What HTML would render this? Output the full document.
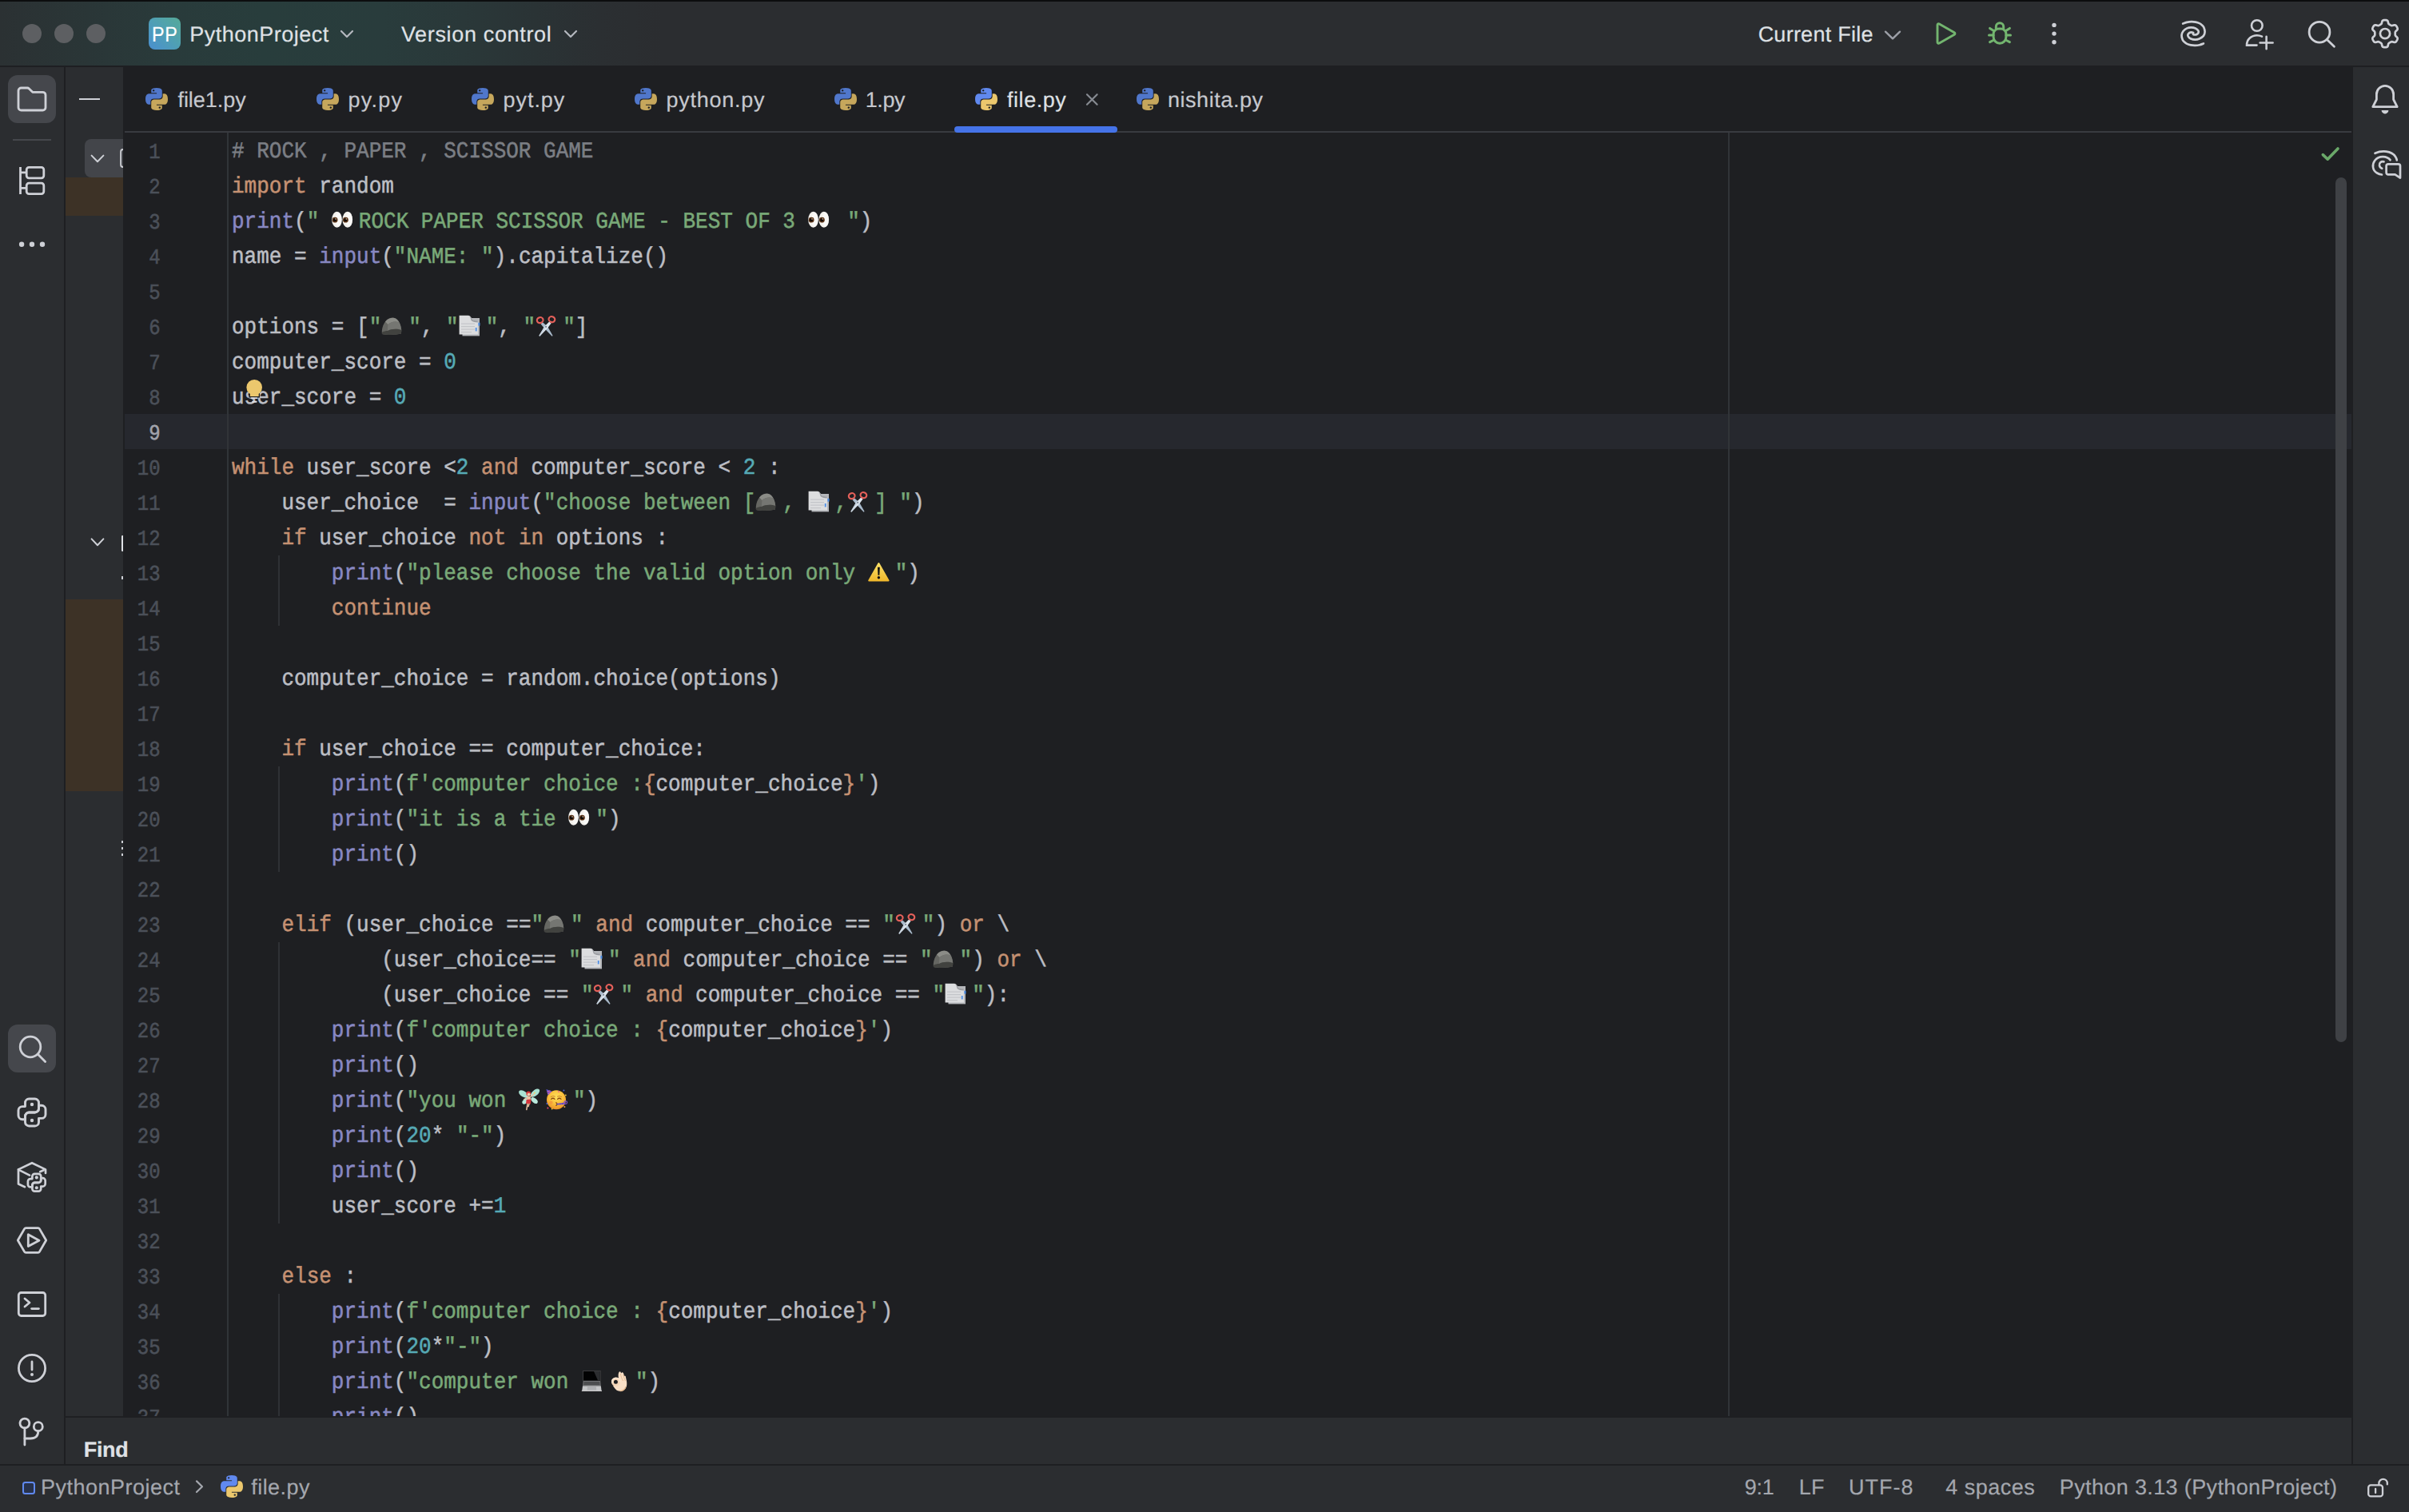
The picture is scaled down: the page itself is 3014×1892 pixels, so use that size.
<!DOCTYPE html>
<html>
<head>
<meta charset="utf-8">
<title>PythonProject – file.py</title>
<style>
html,body{margin:0;padding:0;background:#1e1f22;}
body{text-rendering:geometricPrecision;width:3014px;height:1892px;position:relative;overflow:hidden;font-family:"Liberation Sans",sans-serif;color:#dfe1e5;}
.abs{position:absolute;}
svg{display:block;overflow:visible;}
/* title bar */
#topline{left:0;top:0;width:3014px;height:2px;background:#0c0d0e;}
#title{left:0;top:2px;width:3014px;height:80px;background:#2b2d30;}
#titlegrad{left:0;top:2px;width:1000px;height:80px;background:linear-gradient(90deg,#2b3133 0px,#2a3637 110px,#293b3b 220px,#283d3c 330px,#293c3c 480px,#2a3839 580px,#2a3335 670px,#2b2f32 750px,#2b2d30 830px);}
.tl{width:24px;height:24px;border-radius:50%;background:#5d5f62;top:30.3px;}
.ui{font-size:26px;line-height:40px;white-space:nowrap;color:#dfe1e5;}
/* panels */
#lstripe{left:0;top:84px;width:80px;height:1748px;background:#2b2d30;}
#lsep{left:80px;top:82px;width:2px;height:1750px;background:#1e1f22;}
#proj{left:82px;top:84px;width:72px;height:1688px;background:#2b2d30;}
#rstripe{left:2944px;top:84px;width:70px;height:1748px;background:#2b2d30;}
#rsep{left:2942px;top:82px;width:2px;height:1750px;background:#1e1f22;}
#editor{left:154px;top:82px;width:2788px;height:1692px;background:#1e1f22;overflow:hidden;}
#tabline{left:156px;top:164px;width:2786px;height:2px;background:#393b40;}
#gutline{left:284px;top:166px;width:2px;height:1606px;background:#313438;}
#margin{left:2162px;top:166px;width:2px;height:1606px;background:#313438;}
#curline{left:156px;top:518px;width:2786px;height:44px;background:#26282e;}
#findbar{left:82px;top:1774px;width:2860px;height:58px;background:#2b2d30;}
#findtop{left:82px;top:1772px;width:2860px;height:2px;background:#1e1f22;}
#status{left:0;top:1834px;width:3014px;height:58px;background:#2b2d30;}
#statustop{left:0;top:1832px;width:3014px;height:2px;background:#1e1f22;}
.st{font-size:26px;line-height:40px;color:#a8abb2;top:1840px;white-space:nowrap;}
/* tabs */
.tab{top:105px;font-size:26px;line-height:40px;color:#ced0d6;white-space:nowrap;}
/* code */
.cl{position:absolute;left:290px;height:44px;line-height:44px;font-family:"Liberation Mono",monospace;font-size:26px;color:#bcbec4;white-space:pre;}
.ln{position:absolute;left:150px;width:50.6px;height:44px;line-height:44px;text-align:right;font-family:"Liberation Mono",monospace;font-size:24px;color:#4b5059;}
.ln .t{transform:translateY(4.6px) scaleY(1.13);transform-origin:0 28.4px;}
.ln.cur{color:#a1a3ab;}
.t{display:inline-block;transform:translateY(1.0px) scaleY(1.10);transform-origin:0 28.9px;-webkit-text-stroke:0.5px currentColor;}
.k{color:#c59172}.s{color:#79a978}.n{color:#56aab6}.b{color:#8888c2}.c{color:#7b7e84}
.e{display:inline-block;width:34px;height:44px;vertical-align:top;}
.e svg{width:34px;height:44px;}
.guide{position:absolute;width:2px;background:#2f3135;}
</style>
</head>
<body>
<div id="topline" class="abs"></div>
<div id="title" class="abs"></div>
<div id="titlegrad" class="abs"></div>
<div class="abs tl" style="left:27.9px"></div>
<div class="abs tl" style="left:67.7px"></div>
<div class="abs tl" style="left:107.6px"></div>
<div class="abs" style="left:186px;top:22px;width:40px;height:40px;border-radius:8px;background:linear-gradient(45deg,#4a8fd0 0%,#4f9fb5 50%,#56aa98 100%);"></div>
<div class="abs" style="left:189.69px;top:23.01px;font-size:26.5px;line-height:40px;letter-spacing:0.720px;color:#ffffff;white-space:nowrap;-webkit-text-stroke:0.2px #ffffff;transform:scaleX(0.88);transform-origin:0 0;">PP</div>
<div class="abs" style="left:237.29px;top:22.84px;font-size:27px;line-height:40px;letter-spacing:0.485px;color:#dfe1e5;white-space:nowrap;-webkit-text-stroke:0.2px #dfe1e5;">PythonProject</div>
<svg class="abs" style="left:0px;top:0px;" width="10" height="10" viewBox="0 0 10 10" fill="none"><path d="M427 39 L434.0 46 L441 39" stroke="#b4b8bf" stroke-width="2.2" stroke-linecap="round" stroke-linejoin="round"/></svg>
<div class="abs" style="left:501.88px;top:22.84px;font-size:27px;line-height:40px;letter-spacing:0.666px;color:#dfe1e5;white-space:nowrap;-webkit-text-stroke:0.2px #dfe1e5;">Version control</div>
<svg class="abs" style="left:0px;top:0px;" width="10" height="10" viewBox="0 0 10 10" fill="none"><path d="M707 39 L714.0 46 L721 39" stroke="#b4b8bf" stroke-width="2.2" stroke-linecap="round" stroke-linejoin="round"/></svg>
<div class="abs" style="left:2199.63px;top:22.84px;font-size:27px;line-height:40px;letter-spacing:0.249px;color:#dfe1e5;white-space:nowrap;-webkit-text-stroke:0.2px #dfe1e5;">Current File</div>
<svg class="abs" style="left:0px;top:0px;" width="10" height="10" viewBox="0 0 10 10" fill="none"><path d="M2359 39.7 L2368.0 48.3 L2377 39.7" stroke="#9da0a8" stroke-width="2.4" stroke-linecap="round" stroke-linejoin="round"/></svg>
<svg class="abs" style="left:0px;top:0px;" width="10" height="10" viewBox="0 0 10 10" fill="none"><path d="M2424 31.2 V52.8 a1.6 1.6 0 0 0 2.4 1.3 L2445.2 43.3 a1.5 1.5 0 0 0 0 -2.6 L2426.4 29.9 a1.6 1.6 0 0 0 -2.4 1.3 Z" stroke="#73b56f" stroke-width="2.9" stroke-linejoin="round"/></svg>
<svg class="abs" style="left:0px;top:0px;" width="10" height="10" viewBox="0 0 10 10" fill="none"><g stroke="#73b56f" stroke-width="3" stroke-linecap="round" stroke-linejoin="round"><path d="M2494.1 42.6 a6.5 6.5 0 0 1 6.5 -6.5 h2.8 a6.5 6.5 0 0 1 6.5 6.5 v3.7 a7.9 7.9 0 0 1 -15.8 0 Z"/><path d="M2497.3 35.4 v-2 a4.7 4.7 0 0 1 9.4 0 v2"/><path d="M2494.4 38.6 L2489.6 35.4 M2509.6 38.6 L2514.4 35.4 M2494 43.9 H2488.5 M2510 43.9 H2515.5 M2494.8 50 L2489.6 52.6 M2509.2 50 L2514.4 52.6"/></g></svg>
<svg class="abs" style="left:0px;top:0px;" width="10" height="10" viewBox="0 0 10 10" fill="none"><circle cx="2570" cy="31.4" r="2.7" fill="#ced0d6"/><circle cx="2570" cy="42.1" r="2.7" fill="#ced0d6"/><circle cx="2570" cy="52.8" r="2.7" fill="#ced0d6"/></svg>
<svg class="abs" style="left:0px;top:0px;" width="10" height="10" viewBox="0 0 10 10" fill="none"><g stroke="#ced0d6" stroke-width="2.7" stroke-linecap="round" stroke-linejoin="round" fill="none"><path d="M2731.10 29.50 C2731.92 29.23 2734.22 28.30 2736.00 27.90 C2737.78 27.50 2739.97 27.15 2741.80 27.10 C2743.63 27.05 2745.35 27.27 2747.00 27.60 C2748.65 27.93 2750.37 28.47 2751.70 29.10 C2753.03 29.73 2754.07 30.55 2755.00 31.40 C2755.93 32.25 2756.70 32.80 2757.30 34.20 C2757.90 35.60 2758.67 38.02 2758.60 39.80 C2758.53 41.58 2758.05 43.45 2756.90 44.90 C2755.75 46.35 2753.43 47.70 2751.70 48.50 C2749.97 49.30 2748.28 49.70 2746.50 49.70 C2744.72 49.70 2742.45 49.17 2741.00 48.50 C2739.55 47.83 2738.40 46.57 2737.80 45.70 C2737.20 44.83 2737.13 44.08 2737.40 43.30 C2737.67 42.52 2738.67 41.48 2739.40 41.00 C2740.13 40.52 2741.00 40.40 2741.80 40.40 C2742.60 40.40 2743.80 40.90 2744.20 41.00 "/><path d="M2756.90 54.50 C2756.08 54.78 2753.73 55.82 2752.00 56.20 C2750.27 56.58 2748.33 56.77 2746.50 56.80 C2744.67 56.83 2742.72 56.72 2741.00 56.40 C2739.28 56.08 2737.53 55.53 2736.20 54.90 C2734.87 54.27 2733.92 53.47 2733.00 52.60 C2732.08 51.73 2731.28 51.12 2730.70 49.70 C2730.12 48.28 2729.37 45.88 2729.50 44.10 C2729.63 42.32 2730.38 40.45 2731.50 39.00 C2732.62 37.55 2734.55 36.17 2736.20 35.40 C2737.85 34.63 2739.62 34.40 2741.40 34.40 C2743.18 34.40 2745.42 34.77 2746.90 35.40 C2748.38 36.03 2749.70 37.27 2750.30 38.20 C2750.90 39.13 2750.80 40.20 2750.50 41.00 C2750.20 41.80 2749.30 42.58 2748.50 43.00 C2747.70 43.42 2746.48 43.53 2745.70 43.50 C2744.92 43.47 2744.12 42.92 2743.80 42.80 "/></g></svg>
<svg class="abs" style="left:0px;top:0px;" width="10" height="10" viewBox="0 0 10 10" fill="none"><g stroke="#ced0d6" stroke-width="2.6" stroke-linecap="round" fill="none"><circle cx="2823.8" cy="32" r="6.8"/><path d="M2823.5 56.6 H2811 C2811 49 2817 44.2 2823.8 44.2 C2826.2 44.2 2828.2 44.7 2830 45.6"/><path d="M2835.6 45.8 V61.2 M2827.6 53.5 H2843.6"/></g></svg>
<svg class="abs" style="left:0px;top:0px;" width="10" height="10" viewBox="0 0 10 10" fill="none"><g stroke="#ced0d6" stroke-width="2.8" stroke-linecap="round" fill="none"><circle cx="2902" cy="40.2" r="12.9"/><path d="M2911.4 49.4 L2920.4 58.2"/></g></svg>
<svg class="abs" style="left:0px;top:0px;" width="10" height="10" viewBox="0 0 10 10" fill="none"><path d="M2984.00 25.00 L2984.89 25.04 L2985.78 25.16 L2986.63 25.47 L2987.38 26.22 L2987.86 27.71 L2988.19 29.20 L2988.64 30.00 L2989.19 30.43 L2989.77 30.77 L2990.35 31.10 L2990.92 31.44 L2991.51 31.77 L2992.16 32.03 L2993.08 32.02 L2994.54 31.56 L2996.06 31.24 L2997.09 31.50 L2997.78 32.09 L2998.33 32.79 L2998.81 33.55 L2999.22 34.34 L2999.56 35.17 L2999.72 36.07 L2999.44 37.08 L2998.39 38.24 L2997.27 39.28 L2996.80 40.07 L2996.70 40.77 L2996.70 41.43 L2996.70 42.10 L2996.70 42.77 L2996.70 43.43 L2996.80 44.13 L2997.27 44.92 L2998.39 45.96 L2999.44 47.12 L2999.72 48.13 L2999.56 49.03 L2999.22 49.86 L2998.81 50.65 L2998.33 51.41 L2997.78 52.11 L2997.09 52.70 L2996.06 52.96 L2994.54 52.64 L2993.08 52.18 L2992.16 52.17 L2991.51 52.43 L2990.92 52.76 L2990.35 53.10 L2989.77 53.43 L2989.19 53.77 L2988.64 54.20 L2988.19 55.00 L2987.86 56.49 L2987.38 57.98 L2986.63 58.73 L2985.78 59.04 L2984.89 59.16 L2984.00 59.20 L2983.11 59.16 L2982.22 59.04 L2981.37 58.73 L2980.62 57.98 L2980.14 56.49 L2979.81 55.00 L2979.36 54.20 L2978.81 53.77 L2978.23 53.43 L2977.65 53.10 L2977.08 52.76 L2976.49 52.43 L2975.84 52.17 L2974.92 52.18 L2973.46 52.64 L2971.94 52.96 L2970.91 52.70 L2970.22 52.11 L2969.67 51.41 L2969.19 50.65 L2968.78 49.86 L2968.44 49.03 L2968.28 48.13 L2968.56 47.12 L2969.61 45.96 L2970.73 44.92 L2971.20 44.13 L2971.30 43.43 L2971.30 42.77 L2971.30 42.10 L2971.30 41.43 L2971.30 40.77 L2971.20 40.07 L2970.73 39.28 L2969.61 38.24 L2968.56 37.08 L2968.28 36.07 L2968.44 35.17 L2968.78 34.34 L2969.19 33.55 L2969.67 32.79 L2970.22 32.09 L2970.91 31.50 L2971.94 31.24 L2973.46 31.56 L2974.92 32.02 L2975.84 32.03 L2976.49 31.77 L2977.08 31.44 L2977.65 31.10 L2978.23 30.77 L2978.81 30.43 L2979.36 30.00 L2979.81 29.20 L2980.14 27.71 L2980.62 26.22 L2981.37 25.47 L2982.22 25.16 L2983.11 25.04 L2984.00 25.00 Z" stroke="#ced0d6" stroke-width="2.7" stroke-linejoin="round"/><circle cx="2984" cy="42.1" r="6.1" stroke="#ced0d6" stroke-width="2.7"/></svg>

<div class="abs" style="left:0;top:82px;width:3014px;height:2px;background:#1e1f22;"></div>
<div id="lstripe" class="abs"></div>
<div id="lsep" class="abs"></div>
<div id="proj" class="abs"></div>
<div id="editor" class="abs"></div>
<div id="rsep" class="abs"></div>
<div id="rstripe" class="abs"></div>
<div id="curline" class="abs"></div>
<div id="tabline" class="abs"></div>
<div id="gutline" class="abs"></div>
<div id="margin" class="abs"></div>
<svg class="abs" style="left:180px;top:108px;" width="32" height="32" viewBox="0 0 16 16" fill="none"><path fill-rule="evenodd" d="M7.96 1C4.4 1 4.63 2.53 4.63 2.53V4.13H8.03V4.6H3.29C3.29 4.6 1 4.35 1 7.92C1 11.49 3 11.37 3 11.37H4.17V9.71C4.17 9.71 4.1 7.72 6.13 7.72H9.49C9.49 7.72 11.39 7.75 11.39 5.9V2.84C11.39 2.84 11.68 1 7.96 1ZM6.09 2.07C6.43 2.07 6.7 2.34 6.7 2.68C6.7 3.02 6.43 3.29 6.09 3.29C5.75 3.29 5.48 3.02 5.48 2.68C5.48 2.34 5.75 2.07 6.09 2.07Z" fill="#5077cb"/><path fill-rule="evenodd" d="M8.04 15C11.6 15 11.37 13.47 11.37 13.47V11.87H7.97V11.4H12.71C12.71 11.4 15 11.65 15 8.08C15 4.51 13 4.63 13 4.63H11.83V6.29C11.83 6.29 11.9 8.28 9.87 8.28H6.51C6.51 8.28 4.61 8.25 4.61 10.1V13.16C4.61 13.16 4.32 15 8.04 15ZM9.91 13.93C9.57 13.93 9.3 13.66 9.3 13.32C9.3 12.98 9.57 12.71 9.91 12.71C10.25 12.71 10.52 12.98 10.52 13.32C10.52 13.66 10.25 13.93 9.91 13.93Z" fill="#c6a75c"/></svg>
<div class="abs" style="left:222.42px;top:104.64px;font-size:27px;line-height:40px;letter-spacing:-0.016px;color:#c6c8ce;white-space:nowrap;-webkit-text-stroke:0.2px #c6c8ce;">file1.py</div>
<svg class="abs" style="left:394px;top:108px;" width="32" height="32" viewBox="0 0 16 16" fill="none"><path fill-rule="evenodd" d="M7.96 1C4.4 1 4.63 2.53 4.63 2.53V4.13H8.03V4.6H3.29C3.29 4.6 1 4.35 1 7.92C1 11.49 3 11.37 3 11.37H4.17V9.71C4.17 9.71 4.1 7.72 6.13 7.72H9.49C9.49 7.72 11.39 7.75 11.39 5.9V2.84C11.39 2.84 11.68 1 7.96 1ZM6.09 2.07C6.43 2.07 6.7 2.34 6.7 2.68C6.7 3.02 6.43 3.29 6.09 3.29C5.75 3.29 5.48 3.02 5.48 2.68C5.48 2.34 5.75 2.07 6.09 2.07Z" fill="#5077cb"/><path fill-rule="evenodd" d="M8.04 15C11.6 15 11.37 13.47 11.37 13.47V11.87H7.97V11.4H12.71C12.71 11.4 15 11.65 15 8.08C15 4.51 13 4.63 13 4.63H11.83V6.29C11.83 6.29 11.9 8.28 9.87 8.28H6.51C6.51 8.28 4.61 8.25 4.61 10.1V13.16C4.61 13.16 4.32 15 8.04 15ZM9.91 13.93C9.57 13.93 9.3 13.66 9.3 13.32C9.3 12.98 9.57 12.71 9.91 12.71C10.25 12.71 10.52 12.98 10.52 13.32C10.52 13.66 10.25 13.93 9.91 13.93Z" fill="#c6a75c"/></svg>
<div class="abs" style="left:435.56px;top:104.64px;font-size:27px;line-height:40px;letter-spacing:1.216px;color:#c6c8ce;white-space:nowrap;-webkit-text-stroke:0.2px #c6c8ce;">py.py</div>
<svg class="abs" style="left:588px;top:108px;" width="32" height="32" viewBox="0 0 16 16" fill="none"><path fill-rule="evenodd" d="M7.96 1C4.4 1 4.63 2.53 4.63 2.53V4.13H8.03V4.6H3.29C3.29 4.6 1 4.35 1 7.92C1 11.49 3 11.37 3 11.37H4.17V9.71C4.17 9.71 4.1 7.72 6.13 7.72H9.49C9.49 7.72 11.39 7.75 11.39 5.9V2.84C11.39 2.84 11.68 1 7.96 1ZM6.09 2.07C6.43 2.07 6.7 2.34 6.7 2.68C6.7 3.02 6.43 3.29 6.09 3.29C5.75 3.29 5.48 3.02 5.48 2.68C5.48 2.34 5.75 2.07 6.09 2.07Z" fill="#5077cb"/><path fill-rule="evenodd" d="M8.04 15C11.6 15 11.37 13.47 11.37 13.47V11.87H7.97V11.4H12.71C12.71 11.4 15 11.65 15 8.08C15 4.51 13 4.63 13 4.63H11.83V6.29C11.83 6.29 11.9 8.28 9.87 8.28H6.51C6.51 8.28 4.61 8.25 4.61 10.1V13.16C4.61 13.16 4.32 15 8.04 15ZM9.91 13.93C9.57 13.93 9.3 13.66 9.3 13.32C9.3 12.98 9.57 12.71 9.91 12.71C10.25 12.71 10.52 12.98 10.52 13.32C10.52 13.66 10.25 13.93 9.91 13.93Z" fill="#c6a75c"/></svg>
<div class="abs" style="left:629.46px;top:104.64px;font-size:27px;line-height:40px;letter-spacing:0.972px;color:#c6c8ce;white-space:nowrap;-webkit-text-stroke:0.2px #c6c8ce;">pyt.py</div>
<svg class="abs" style="left:792px;top:108px;" width="32" height="32" viewBox="0 0 16 16" fill="none"><path fill-rule="evenodd" d="M7.96 1C4.4 1 4.63 2.53 4.63 2.53V4.13H8.03V4.6H3.29C3.29 4.6 1 4.35 1 7.92C1 11.49 3 11.37 3 11.37H4.17V9.71C4.17 9.71 4.1 7.72 6.13 7.72H9.49C9.49 7.72 11.39 7.75 11.39 5.9V2.84C11.39 2.84 11.68 1 7.96 1ZM6.09 2.07C6.43 2.07 6.7 2.34 6.7 2.68C6.7 3.02 6.43 3.29 6.09 3.29C5.75 3.29 5.48 3.02 5.48 2.68C5.48 2.34 5.75 2.07 6.09 2.07Z" fill="#5077cb"/><path fill-rule="evenodd" d="M8.04 15C11.6 15 11.37 13.47 11.37 13.47V11.87H7.97V11.4H12.71C12.71 11.4 15 11.65 15 8.08C15 4.51 13 4.63 13 4.63H11.83V6.29C11.83 6.29 11.9 8.28 9.87 8.28H6.51C6.51 8.28 4.61 8.25 4.61 10.1V13.16C4.61 13.16 4.32 15 8.04 15ZM9.91 13.93C9.57 13.93 9.3 13.66 9.3 13.32C9.3 12.98 9.57 12.71 9.91 12.71C10.25 12.71 10.52 12.98 10.52 13.32C10.52 13.66 10.25 13.93 9.91 13.93Z" fill="#c6a75c"/></svg>
<div class="abs" style="left:833.56px;top:104.64px;font-size:27px;line-height:40px;letter-spacing:0.739px;color:#c6c8ce;white-space:nowrap;-webkit-text-stroke:0.2px #c6c8ce;">python.py</div>
<svg class="abs" style="left:1042px;top:108px;" width="32" height="32" viewBox="0 0 16 16" fill="none"><path fill-rule="evenodd" d="M7.96 1C4.4 1 4.63 2.53 4.63 2.53V4.13H8.03V4.6H3.29C3.29 4.6 1 4.35 1 7.92C1 11.49 3 11.37 3 11.37H4.17V9.71C4.17 9.71 4.1 7.72 6.13 7.72H9.49C9.49 7.72 11.39 7.75 11.39 5.9V2.84C11.39 2.84 11.68 1 7.96 1ZM6.09 2.07C6.43 2.07 6.7 2.34 6.7 2.68C6.7 3.02 6.43 3.29 6.09 3.29C5.75 3.29 5.48 3.02 5.48 2.68C5.48 2.34 5.75 2.07 6.09 2.07Z" fill="#5077cb"/><path fill-rule="evenodd" d="M8.04 15C11.6 15 11.37 13.47 11.37 13.47V11.87H7.97V11.4H12.71C12.71 11.4 15 11.65 15 8.08C15 4.51 13 4.63 13 4.63H11.83V6.29C11.83 6.29 11.9 8.28 9.87 8.28H6.51C6.51 8.28 4.61 8.25 4.61 10.1V13.16C4.61 13.16 4.32 15 8.04 15ZM9.91 13.93C9.57 13.93 9.3 13.66 9.3 13.32C9.3 12.98 9.57 12.71 9.91 12.71C10.25 12.71 10.52 12.98 10.52 13.32C10.52 13.66 10.25 13.93 9.91 13.93Z" fill="#c6a75c"/></svg>
<div class="abs" style="left:1082.64px;top:104.64px;font-size:27px;line-height:40px;letter-spacing:-0.374px;color:#c6c8ce;white-space:nowrap;-webkit-text-stroke:0.2px #c6c8ce;">1.py</div>
<svg class="abs" style="left:1218px;top:108px;" width="32" height="32" viewBox="0 0 16 16" fill="none"><path fill-rule="evenodd" d="M7.96 1C4.4 1 4.63 2.53 4.63 2.53V4.13H8.03V4.6H3.29C3.29 4.6 1 4.35 1 7.92C1 11.49 3 11.37 3 11.37H4.17V9.71C4.17 9.71 4.1 7.72 6.13 7.72H9.49C9.49 7.72 11.39 7.75 11.39 5.9V2.84C11.39 2.84 11.68 1 7.96 1ZM6.09 2.07C6.43 2.07 6.7 2.34 6.7 2.68C6.7 3.02 6.43 3.29 6.09 3.29C5.75 3.29 5.48 3.02 5.48 2.68C5.48 2.34 5.75 2.07 6.09 2.07Z" fill="#6089ef"/><path fill-rule="evenodd" d="M8.04 15C11.6 15 11.37 13.47 11.37 13.47V11.87H7.97V11.4H12.71C12.71 11.4 15 11.65 15 8.08C15 4.51 13 4.63 13 4.63H11.83V6.29C11.83 6.29 11.9 8.28 9.87 8.28H6.51C6.51 8.28 4.61 8.25 4.61 10.1V13.16C4.61 13.16 4.32 15 8.04 15ZM9.91 13.93C9.57 13.93 9.3 13.66 9.3 13.32C9.3 12.98 9.57 12.71 9.91 12.71C10.25 12.71 10.52 12.98 10.52 13.32C10.52 13.66 10.25 13.93 9.91 13.93Z" fill="#ebc76d"/></svg>
<div class="abs" style="left:1260.02px;top:104.64px;font-size:27px;line-height:40px;letter-spacing:0.551px;color:#dfe1e5;white-space:nowrap;-webkit-text-stroke:0.2px #dfe1e5;">file.py</div>
<svg class="abs" style="left:1420px;top:108px;" width="32" height="32" viewBox="0 0 16 16" fill="none"><path fill-rule="evenodd" d="M7.96 1C4.4 1 4.63 2.53 4.63 2.53V4.13H8.03V4.6H3.29C3.29 4.6 1 4.35 1 7.92C1 11.49 3 11.37 3 11.37H4.17V9.71C4.17 9.71 4.1 7.72 6.13 7.72H9.49C9.49 7.72 11.39 7.75 11.39 5.9V2.84C11.39 2.84 11.68 1 7.96 1ZM6.09 2.07C6.43 2.07 6.7 2.34 6.7 2.68C6.7 3.02 6.43 3.29 6.09 3.29C5.75 3.29 5.48 3.02 5.48 2.68C5.48 2.34 5.75 2.07 6.09 2.07Z" fill="#5077cb"/><path fill-rule="evenodd" d="M8.04 15C11.6 15 11.37 13.47 11.37 13.47V11.87H7.97V11.4H12.71C12.71 11.4 15 11.65 15 8.08C15 4.51 13 4.63 13 4.63H11.83V6.29C11.83 6.29 11.9 8.28 9.87 8.28H6.51C6.51 8.28 4.61 8.25 4.61 10.1V13.16C4.61 13.16 4.32 15 8.04 15ZM9.91 13.93C9.57 13.93 9.3 13.66 9.3 13.32C9.3 12.98 9.57 12.71 9.91 12.71C10.25 12.71 10.52 12.98 10.52 13.32C10.52 13.66 10.25 13.93 9.91 13.93Z" fill="#c6a75c"/></svg>
<div class="abs" style="left:1460.91px;top:104.64px;font-size:27px;line-height:40px;letter-spacing:0.565px;color:#c6c8ce;white-space:nowrap;-webkit-text-stroke:0.2px #c6c8ce;">nishita.py</div>
<svg class="abs" style="left:0px;top:0px;" width="10" height="10" viewBox="0 0 10 10" fill="none"><path d="M1360 118.2 L1372.6 130.8 M1372.6 118.2 L1360 130.8" stroke="#868a91" stroke-width="2.2" stroke-linecap="round"/></svg>
<div class="abs" style="left:1194px;top:158px;width:204px;height:8px;border-radius:4px;background:#4573e8;"></div>
<div class="abs" style="left:10px;top:94px;width:60px;height:60px;border-radius:12px;background:#45474c;"></div>
<div class="abs" style="left:10px;top:1282px;width:60px;height:60px;border-radius:12px;background:#45474c;"></div>
<div class="abs" style="left:16px;top:174px;width:48px;height:2px;background:#45474c;"></div>
<svg class="abs" style="left:0px;top:0px;" width="10" height="10" viewBox="0 0 10 10" fill="none"><g stroke="#ced0d6" stroke-width="2.8" stroke-linecap="round" stroke-linejoin="round" fill="none"><path d="M23 113.6 a3.6 3.6 0 0 1 3.6 -3.6 h7.6 a3 3 0 0 1 2.2 0.9 l4.4 4.4 h12.6 a3.6 3.6 0 0 1 3.6 3.6 v15.5 a3.6 3.6 0 0 1 -3.6 3.6 h-26.8 a3.6 3.6 0 0 1 -3.6 -3.6 Z"/></g></svg>
<svg class="abs" style="left:0px;top:0px;" width="10" height="10" viewBox="0 0 10 10" fill="none"><g stroke="#ced0d6" stroke-width="2.8" stroke-linecap="round" stroke-linejoin="round" fill="none"><path d="M25.5 209 V243" stroke-linecap="butt"/><path d="M26 215.8 H33 M26 235.4 H33" stroke-linecap="butt"/><rect x="33.2" y="209.4" width="21.6" height="13.4" rx="3"/><rect x="33.2" y="229.2" width="21.6" height="13.4" rx="3"/></g></svg>
<svg class="abs" style="left:0px;top:0px;" width="10" height="10" viewBox="0 0 10 10" fill="none"><circle cx="27.1" cy="305.8" r="3.2" fill="#ced0d6"/><circle cx="40" cy="305.8" r="3.2" fill="#ced0d6"/><circle cx="53" cy="305.8" r="3.2" fill="#ced0d6"/></svg>
<svg class="abs" style="left:0px;top:0px;" width="10" height="10" viewBox="0 0 10 10" fill="none"><g stroke="#ced0d6" stroke-width="2.8" stroke-linecap="round" stroke-linejoin="round" fill="none"><circle cx="38" cy="1310" r="12.8"/><path d="M47.4 1319.3 L56.6 1328.6"/></g></svg>
<svg class="abs" style="left:20px;top:1372px;" width="40" height="40" viewBox="0 0 20 20" fill="none"><path d="M5.75 6.3 H4 A2.5 2.5 0 0 0 1.5 8.8 v3.1 a2.5 2.5 0 0 0 2.5 2.5 H5.75 v-2 a2.4 2.4 0 0 1 2.4-2.4 h3.7 a2.4 2.4 0 0 0 2.4-2.4 V3.9 a2.4 2.4 0 0 0 -2.4-2.4 h-3.7 A2.4 2.4 0 0 0 5.75 3.9 Z" stroke="#ced0d6" stroke-width="1.45" stroke-linejoin="round"/><path d="M5.75 6.3 H4 A2.5 2.5 0 0 0 1.5 8.8 v3.1 a2.5 2.5 0 0 0 2.5 2.5 H5.75 v-2 a2.4 2.4 0 0 1 2.4-2.4 h3.7 a2.4 2.4 0 0 0 2.4-2.4 V3.9 a2.4 2.4 0 0 0 -2.4-2.4 h-3.7 A2.4 2.4 0 0 0 5.75 3.9 Z" transform="rotate(180 10 10)" stroke="#ced0d6" stroke-width="1.45" stroke-linejoin="round"/><circle cx="10" cy="5" r="1.1" fill="#ced0d6"/><circle cx="10" cy="15" r="1.1" fill="#ced0d6"/></svg>
<svg class="abs" style="left:0px;top:0px;" width="10" height="10" viewBox="0 0 10 10" fill="none"><g stroke="#ced0d6" stroke-width="2.7" stroke-linecap="round" stroke-linejoin="round" fill="none"><path d="M23 1463.4 L40 1455.2 L57 1463.4 V1468"/><path d="M23 1463.4 V1481.5 L31 1485.2"/><path d="M24.5 1464.4 L37 1470.6"/><path d="M50.2 1466.2 L54.6 1464.2" /></g></svg>
<svg class="abs" style="left:33.4px;top:1466.8px;" width="25.6" height="25.6" viewBox="0 0 20 20" fill="none"><path d="M5.75 6.3 H4 A2.5 2.5 0 0 0 1.5 8.8 v3.1 a2.5 2.5 0 0 0 2.5 2.5 H5.75 v-2 a2.4 2.4 0 0 1 2.4-2.4 h3.7 a2.4 2.4 0 0 0 2.4-2.4 V3.9 a2.4 2.4 0 0 0 -2.4-2.4 h-3.7 A2.4 2.4 0 0 0 5.75 3.9 Z" stroke="#ced0d6" stroke-width="2.1" stroke-linejoin="round"/><path d="M5.75 6.3 H4 A2.5 2.5 0 0 0 1.5 8.8 v3.1 a2.5 2.5 0 0 0 2.5 2.5 H5.75 v-2 a2.4 2.4 0 0 1 2.4-2.4 h3.7 a2.4 2.4 0 0 0 2.4-2.4 V3.9 a2.4 2.4 0 0 0 -2.4-2.4 h-3.7 A2.4 2.4 0 0 0 5.75 3.9 Z" transform="rotate(180 10 10)" stroke="#ced0d6" stroke-width="2.1" stroke-linejoin="round"/><circle cx="10" cy="5" r="1.6" fill="#ced0d6"/><circle cx="10" cy="15" r="1.6" fill="#ced0d6"/></svg>
<svg class="abs" style="left:0px;top:0px;" width="10" height="10" viewBox="0 0 10 10" fill="none"><g stroke="#ced0d6" stroke-width="2.8" stroke-linecap="round" stroke-linejoin="round" fill="none"><path d="M22.3 1552 L30.6 1537.6 a2 2 0 0 1 1.7 -1 H47.7 a2 2 0 0 1 1.7 1 L57.7 1552 L49.4 1566.4 a2 2 0 0 1 -1.7 1 H32.3 a2 2 0 0 1 -1.7 -1 Z"/><path d="M35.3 1544.8 V1559.6 L49 1552.2 Z"/></g></svg>
<svg class="abs" style="left:0px;top:0px;" width="10" height="10" viewBox="0 0 10 10" fill="none"><g stroke="#ced0d6" stroke-width="2.8" stroke-linecap="round" stroke-linejoin="round" fill="none"><rect x="23.3" y="1617.5" width="33.4" height="29" rx="3.2"/><path d="M31 1625 L37 1630 L31 1635"/><path d="M39.6 1637.6 H48.4"/></g></svg>
<svg class="abs" style="left:0px;top:0px;" width="10" height="10" viewBox="0 0 10 10" fill="none"><g stroke="#ced0d6" stroke-width="2.8" stroke-linecap="round" stroke-linejoin="round" fill="none"><circle cx="40" cy="1712" r="16.6"/><path d="M40 1704 V1714"/></g><circle cx="40" cy="1720" r="2" fill="#ced0d6"/></svg>
<svg class="abs" style="left:0px;top:0px;" width="10" height="10" viewBox="0 0 10 10" fill="none"><g stroke="#ced0d6" stroke-width="2.8" stroke-linecap="round" stroke-linejoin="round" fill="none"><circle cx="30.9" cy="1781" r="5.9"/><circle cx="47.8" cy="1785.2" r="5.5"/><path d="M30.9 1787 V1808"/><path d="M47.8 1790.8 C47.8 1797 44 1800 38 1800 H31"/></g></svg>
<svg class="abs" style="left:0px;top:0px;" width="10" height="10" viewBox="0 0 10 10" fill="none"><g stroke="#ced0d6" stroke-width="2.8" stroke-linecap="round" stroke-linejoin="round" fill="none"><path d="M2973.4 118 a10.6 10.6 0 0 1 21.2 0 v6.5 l4.6 9.2 H2968.8 l4.6 -9.2 Z"/></g><path d="M2979.6 138 H2988.4 a4.4 4.4 0 0 1 -8.8 0 Z" fill="#ced0d6"/></svg>
<svg class="abs" style="left:0px;top:0px;" width="10" height="10" viewBox="0 0 10 10" fill="none"><g stroke="#ced0d6" stroke-width="2.7" stroke-linecap="round" stroke-linejoin="round" fill="none"><path d="M2971.5 191.8 C2980 188 2992 188.5 2997 196 C2998 197.6 2998.6 199 2998.8 200.4"/><path d="M2990.5 200.2 C2986 194.5 2976 195 2971.5 200.5 C2967.5 205.5 2968 213 2974 216.5 C2976 217.7 2978 218.3 2980 218.5"/><path d="M2982.5 202.4 C2979 201.5 2976.5 204 2977 207 C2977.4 209 2978.6 210.2 2980.2 210.8"/><path d="M2985.6 207.6 a2.4 2.4 0 0 1 2.4 -2.4 h12.4 a2.4 2.4 0 0 1 2.4 2.4 V2222 " stroke="none"/><path d="M2988 205.3 h12.6 a2.4 2.4 0 0 1 2.4 2.4 V222.6 L2996.6 218.4 H2988 a2.4 2.4 0 0 1 -2.4 -2.4 V207.7 a2.4 2.4 0 0 1 2.4 -2.4 Z"/></g></svg>
<div class="abs" style="left:99px;top:122.8px;width:26px;height:2.4px;background:#ced0d6;"></div>
<div class="abs" style="left:106px;top:174px;width:48px;height:48px;border-radius:8px 0 0 8px;background:#43454a;overflow:hidden;"></div>
<svg class="abs" style="left:0px;top:0px;" width="10" height="10" viewBox="0 0 10 10" fill="none"><path d="M114.6 194.6 L122.0 202.2 L129.4 194.6" stroke="#ced0d6" stroke-width="2.0" stroke-linecap="round" stroke-linejoin="round"/></svg>
<div class="abs" style="left:150.2px;top:185.6px;width:10px;height:24.4px;border:2.4px solid #ced0d6;border-radius:4px;box-sizing:border-box;clip-path:inset(0 6.2px 0 0);"></div>
<div class="abs" style="left:82px;top:222px;width:72px;height:48px;background:#3d3226;"></div>
<div class="abs" style="left:82px;top:750px;width:72px;height:240px;background:#3d3226;"></div>
<svg class="abs" style="left:0px;top:0px;" width="10" height="10" viewBox="0 0 10 10" fill="none"><path d="M114.6 674.4 L122.0 682.2 L129.4 674.4" stroke="#ced0d6" stroke-width="2.0" stroke-linecap="round" stroke-linejoin="round"/></svg>
<div class="abs" style="left:151.6px;top:670px;width:2.4px;height:20px;border-radius:1.2px 0 0 1.2px;background:#dfe1e5;"></div>
<div class="abs" style="left:152px;top:721px;width:2px;height:4px;background:#ced0d6;"></div>
<div class="abs" style="left:152px;top:1052px;width:2px;height:3px;background:#ced0d6;"></div>
<div class="abs" style="left:152px;top:1060px;width:2px;height:3px;background:#ced0d6;"></div>
<div class="abs" style="left:152px;top:1068px;width:2px;height:3px;background:#ced0d6;"></div>

<div id="codewrap" class="abs" style="left:0;top:0;width:2942px;height:1772px;overflow:hidden;">
<div class="guide" style="left:348px;top:695px;height:88px"></div>
<div class="guide" style="left:348px;top:959px;height:132px"></div>
<div class="guide" style="left:348px;top:1179px;height:352px"></div>
<div class="guide" style="left:348px;top:1619px;height:220px"></div>
<div class="ln" style="top:167px"><span class="t">1</span></div>
<div class="cl" style="top:167px"><span class="t c"># ROCK , PAPER , SCISSOR GAME</span></div>
<div class="ln" style="top:211px"><span class="t">2</span></div>
<div class="cl" style="top:211px"><span class="t k">import</span><span class="t "> random</span></div>
<div class="ln" style="top:255px"><span class="t">3</span></div>
<div class="cl" style="top:255px"><span class="t b">print</span><span class="t ">(</span><span class="t s">" </span><span class="e"><svg viewBox="0 0 34 44"><ellipse cx="6.5" cy="19.7" rx="6.3" ry="10" fill="#f3f1ed"/><ellipse cx="19.8" cy="19.7" rx="6.3" ry="10" fill="#f3f1ed"/><ellipse cx="8.6" cy="19.7" rx="4" ry="9.2" fill="#ffffff" opacity=".55"/><ellipse cx="21.9" cy="19.7" rx="4" ry="9.2" fill="#ffffff" opacity=".55"/><circle cx="4.1" cy="20.2" r="3.4" fill="#5b3418"/><circle cx="17.4" cy="20.2" r="3.4" fill="#5b3418"/><circle cx="3.9" cy="20.3" r="2" fill="#120b07"/><circle cx="17.2" cy="20.3" r="2" fill="#120b07"/><circle cx="5" cy="19" r=".8" fill="#e8d9c8"/><circle cx="18.3" cy="19" r=".8" fill="#e8d9c8"/></svg></span><span class="t s">ROCK PAPER SCISSOR GAME - BEST OF 3 </span><span class="e"><svg viewBox="0 0 34 44"><ellipse cx="6.5" cy="19.7" rx="6.3" ry="10" fill="#f3f1ed"/><ellipse cx="19.8" cy="19.7" rx="6.3" ry="10" fill="#f3f1ed"/><ellipse cx="8.6" cy="19.7" rx="4" ry="9.2" fill="#ffffff" opacity=".55"/><ellipse cx="21.9" cy="19.7" rx="4" ry="9.2" fill="#ffffff" opacity=".55"/><circle cx="4.1" cy="20.2" r="3.4" fill="#5b3418"/><circle cx="17.4" cy="20.2" r="3.4" fill="#5b3418"/><circle cx="3.9" cy="20.3" r="2" fill="#120b07"/><circle cx="17.2" cy="20.3" r="2" fill="#120b07"/><circle cx="5" cy="19" r=".8" fill="#e8d9c8"/><circle cx="18.3" cy="19" r=".8" fill="#e8d9c8"/></svg></span><span class="t s"> "</span><span class="t ">)</span></div>
<div class="ln" style="top:299px"><span class="t">4</span></div>
<div class="cl" style="top:299px"><span class="t ">name = </span><span class="t b">input</span><span class="t ">(</span><span class="t s">"NAME: "</span><span class="t ">).capitalize()</span></div>
<div class="ln" style="top:343px"><span class="t">5</span></div>
<div class="ln" style="top:387px"><span class="t">6</span></div>
<div class="cl" style="top:387px"><span class="t ">options = [</span><span class="t s">"</span><span class="e"><svg viewBox="0 0 34 44"><path d="M0.8 29.5 C0.4 24 3 16.5 8 12.6 C11 10.3 15 9.9 18 11.4 C22.5 14 25 20 25.3 27 L24.9 30.6 C19 32.4 6 32.4 1 30.9 Z" fill="#656662"/><path d="M5 15.5 C8 11.5 14 9.8 18 11.4 C20 12.6 21.5 14.5 22.6 16.6 C18 14.5 12 15.5 8.5 19 C7 17.5 6 16.5 5 15.5 Z" fill="#8b8c87"/><path d="M8.5 19 C12 15.5 18 14.5 22.6 16.6 C24 19.5 24.9 23 25.2 26 C20 24 12 24.5 8 27 C8 24 8 21.5 8.5 19 Z" fill="#757672"/><path d="M0.8 29 C3 27.4 6 27 8 27 C12 24.5 20 24 25.2 26 L24.9 30.6 C19 32.4 6 32.4 1 30.9 Z" fill="#41423f"/></svg></span><span class="t s">"</span><span class="t ">, </span><span class="t s">"</span><span class="e"><svg viewBox="0 0 34 44"><path d="M4.5 11 H26 V33.4 H4.5 Z" fill="#b4b6ba"/><path d="M0.6 7.8 H12 C13.5 7.8 14.2 8.6 15 9.8 L17 13 C18 14 19.5 14.2 24 14.2 V31.6 H0.6 Z" fill="#dcdddf"/><path d="M12.5 8 C14.5 9.5 15 12 15.6 14 C17 15.6 20 16.4 23.8 16.6 V14.2 C19.5 14.2 18 14 17 13 L15 9.8 C14.3 8.7 13.6 8.1 12.5 8 Z" fill="#9a9ca1"/><rect x="3" y="17.5" width="17" height="1.2" fill="#c3c5c9"/><rect x="3" y="21" width="17" height="1.2" fill="#c3c5c9"/><rect x="3" y="24.5" width="17" height="1.2" fill="#c3c5c9"/><rect x="3" y="28" width="13" height="1.2" fill="#c3c5c9"/><rect x="24.4" y="16.8" width="2.1" height="3.8" fill="#4d8fe8"/><rect x="20.8" y="23" width="1.8" height="4.4" fill="#4d8fe8"/></svg></span><span class="t s">"</span><span class="t ">, </span><span class="t s">"</span><span class="e"><svg viewBox="0 0 34 44"><path d="M8.9 16.2 L6.6 18.4 L11 23.8 L20.6 33.8 L21.6 33 L15 21.6 Z" fill="#a9bacb"/><path d="M17.2 15.4 L19.6 17.4 L15.2 23.6 L5.4 33.8 L4.4 33 L11.2 21.4 Z" fill="#dde5ed"/><path d="M12.6 22.6 L5.4 33.8 L4.4 33 L11 22 Z" fill="#c2cfdc"/><circle cx="13.1" cy="21.8" r="1.1" fill="#7b8794"/><ellipse cx="5.7" cy="13.6" rx="3.9" ry="3.5" fill="none" stroke="#e4605a" stroke-width="2.2" transform="rotate(-25 5.7 13.6)"/><ellipse cx="20.4" cy="12.6" rx="3.9" ry="3.5" fill="none" stroke="#e4605a" stroke-width="2.2" transform="rotate(25 20.4 12.6)"/></svg></span><span class="t s">"</span><span class="t ">]</span></div>
<div class="ln" style="top:431px"><span class="t">7</span></div>
<div class="cl" style="top:431px"><span class="t ">computer_score = </span><span class="t n">0</span></div>
<div class="ln" style="top:475px"><span class="t">8</span></div>
<div class="cl" style="top:475px"><span class="t ">user_score = </span><span class="t n">0</span></div>
<div class="ln cur" style="top:519px"><span class="t">9</span></div>
<div class="ln" style="top:563px"><span class="t">10</span></div>
<div class="cl" style="top:563px"><span class="t k">while</span><span class="t "> user_score &lt;</span><span class="t n">2</span><span class="t "> </span><span class="t k">and</span><span class="t "> computer_score &lt; </span><span class="t n">2</span><span class="t "> :</span></div>
<div class="ln" style="top:607px"><span class="t">11</span></div>
<div class="cl" style="top:607px"><span class="t ">    user_choice  = </span><span class="t b">input</span><span class="t ">(</span><span class="t s">"choose between [</span><span class="e"><svg viewBox="0 0 34 44"><path d="M0.8 29.5 C0.4 24 3 16.5 8 12.6 C11 10.3 15 9.9 18 11.4 C22.5 14 25 20 25.3 27 L24.9 30.6 C19 32.4 6 32.4 1 30.9 Z" fill="#656662"/><path d="M5 15.5 C8 11.5 14 9.8 18 11.4 C20 12.6 21.5 14.5 22.6 16.6 C18 14.5 12 15.5 8.5 19 C7 17.5 6 16.5 5 15.5 Z" fill="#8b8c87"/><path d="M8.5 19 C12 15.5 18 14.5 22.6 16.6 C24 19.5 24.9 23 25.2 26 C20 24 12 24.5 8 27 C8 24 8 21.5 8.5 19 Z" fill="#757672"/><path d="M0.8 29 C3 27.4 6 27 8 27 C12 24.5 20 24 25.2 26 L24.9 30.6 C19 32.4 6 32.4 1 30.9 Z" fill="#41423f"/></svg></span><span class="t s">, </span><span class="e"><svg viewBox="0 0 34 44"><path d="M4.5 11 H26 V33.4 H4.5 Z" fill="#b4b6ba"/><path d="M0.6 7.8 H12 C13.5 7.8 14.2 8.6 15 9.8 L17 13 C18 14 19.5 14.2 24 14.2 V31.6 H0.6 Z" fill="#dcdddf"/><path d="M12.5 8 C14.5 9.5 15 12 15.6 14 C17 15.6 20 16.4 23.8 16.6 V14.2 C19.5 14.2 18 14 17 13 L15 9.8 C14.3 8.7 13.6 8.1 12.5 8 Z" fill="#9a9ca1"/><rect x="3" y="17.5" width="17" height="1.2" fill="#c3c5c9"/><rect x="3" y="21" width="17" height="1.2" fill="#c3c5c9"/><rect x="3" y="24.5" width="17" height="1.2" fill="#c3c5c9"/><rect x="3" y="28" width="13" height="1.2" fill="#c3c5c9"/><rect x="24.4" y="16.8" width="2.1" height="3.8" fill="#4d8fe8"/><rect x="20.8" y="23" width="1.8" height="4.4" fill="#4d8fe8"/></svg></span><span class="t s">,</span><span class="e"><svg viewBox="0 0 34 44"><path d="M8.9 16.2 L6.6 18.4 L11 23.8 L20.6 33.8 L21.6 33 L15 21.6 Z" fill="#a9bacb"/><path d="M17.2 15.4 L19.6 17.4 L15.2 23.6 L5.4 33.8 L4.4 33 L11.2 21.4 Z" fill="#dde5ed"/><path d="M12.6 22.6 L5.4 33.8 L4.4 33 L11 22 Z" fill="#c2cfdc"/><circle cx="13.1" cy="21.8" r="1.1" fill="#7b8794"/><ellipse cx="5.7" cy="13.6" rx="3.9" ry="3.5" fill="none" stroke="#e4605a" stroke-width="2.2" transform="rotate(-25 5.7 13.6)"/><ellipse cx="20.4" cy="12.6" rx="3.9" ry="3.5" fill="none" stroke="#e4605a" stroke-width="2.2" transform="rotate(25 20.4 12.6)"/></svg></span><span class="t s">] "</span><span class="t ">)</span></div>
<div class="ln" style="top:651px"><span class="t">12</span></div>
<div class="cl" style="top:651px"><span class="t ">    </span><span class="t k">if</span><span class="t "> user_choice </span><span class="t k">not in</span><span class="t "> options :</span></div>
<div class="ln" style="top:695px"><span class="t">13</span></div>
<div class="cl" style="top:695px"><span class="t ">        </span><span class="t b">print</span><span class="t ">(</span><span class="t s">"please choose the valid option only </span><span class="e"><svg viewBox="0 0 34 44"><defs><linearGradient id="wg" x1="0" y1="0" x2="0" y2="1"><stop offset="0" stop-color="#fbe067"/><stop offset="1" stop-color="#f1b92d"/></linearGradient></defs><path d="M13.4 10 L25.6 31.4 H1.2 Z" fill="url(#wg)" stroke="url(#wg)" stroke-width="2" stroke-linejoin="round"/><path d="M12 14.8 H14.8 L14.3 24.8 H12.5 Z" fill="#111"/><circle cx="13.4" cy="27.7" r="1.7" fill="#111"/></svg></span><span class="t s">"</span><span class="t ">)</span></div>
<div class="ln" style="top:739px"><span class="t">14</span></div>
<div class="cl" style="top:739px"><span class="t ">        </span><span class="t k">continue</span></div>
<div class="ln" style="top:783px"><span class="t">15</span></div>
<div class="ln" style="top:827px"><span class="t">16</span></div>
<div class="cl" style="top:827px"><span class="t ">    computer_choice = random.choice(options)</span></div>
<div class="ln" style="top:871px"><span class="t">17</span></div>
<div class="ln" style="top:915px"><span class="t">18</span></div>
<div class="cl" style="top:915px"><span class="t ">    </span><span class="t k">if</span><span class="t "> user_choice == computer_choice:</span></div>
<div class="ln" style="top:959px"><span class="t">19</span></div>
<div class="cl" style="top:959px"><span class="t ">        </span><span class="t b">print</span><span class="t ">(</span><span class="t s">f'computer choice :</span><span class="t k">{</span><span class="t ">computer_choice</span><span class="t k">}</span><span class="t s">'</span><span class="t ">)</span></div>
<div class="ln" style="top:1003px"><span class="t">20</span></div>
<div class="cl" style="top:1003px"><span class="t ">        </span><span class="t b">print</span><span class="t ">(</span><span class="t s">"it is a tie </span><span class="e"><svg viewBox="0 0 34 44"><ellipse cx="6.5" cy="19.7" rx="6.3" ry="10" fill="#f3f1ed"/><ellipse cx="19.8" cy="19.7" rx="6.3" ry="10" fill="#f3f1ed"/><ellipse cx="8.6" cy="19.7" rx="4" ry="9.2" fill="#ffffff" opacity=".55"/><ellipse cx="21.9" cy="19.7" rx="4" ry="9.2" fill="#ffffff" opacity=".55"/><circle cx="4.1" cy="20.2" r="3.4" fill="#5b3418"/><circle cx="17.4" cy="20.2" r="3.4" fill="#5b3418"/><circle cx="3.9" cy="20.3" r="2" fill="#120b07"/><circle cx="17.2" cy="20.3" r="2" fill="#120b07"/><circle cx="5" cy="19" r=".8" fill="#e8d9c8"/><circle cx="18.3" cy="19" r=".8" fill="#e8d9c8"/></svg></span><span class="t s">"</span><span class="t ">)</span></div>
<div class="ln" style="top:1047px"><span class="t">21</span></div>
<div class="cl" style="top:1047px"><span class="t ">        </span><span class="t b">print</span><span class="t ">()</span></div>
<div class="ln" style="top:1091px"><span class="t">22</span></div>
<div class="ln" style="top:1135px"><span class="t">23</span></div>
<div class="cl" style="top:1135px"><span class="t ">    </span><span class="t k">elif</span><span class="t "> (user_choice ==</span><span class="t s">"</span><span class="e"><svg viewBox="0 0 34 44"><path d="M0.8 29.5 C0.4 24 3 16.5 8 12.6 C11 10.3 15 9.9 18 11.4 C22.5 14 25 20 25.3 27 L24.9 30.6 C19 32.4 6 32.4 1 30.9 Z" fill="#656662"/><path d="M5 15.5 C8 11.5 14 9.8 18 11.4 C20 12.6 21.5 14.5 22.6 16.6 C18 14.5 12 15.5 8.5 19 C7 17.5 6 16.5 5 15.5 Z" fill="#8b8c87"/><path d="M8.5 19 C12 15.5 18 14.5 22.6 16.6 C24 19.5 24.9 23 25.2 26 C20 24 12 24.5 8 27 C8 24 8 21.5 8.5 19 Z" fill="#757672"/><path d="M0.8 29 C3 27.4 6 27 8 27 C12 24.5 20 24 25.2 26 L24.9 30.6 C19 32.4 6 32.4 1 30.9 Z" fill="#41423f"/></svg></span><span class="t s">"</span><span class="t "> </span><span class="t k">and</span><span class="t "> computer_choice == </span><span class="t s">"</span><span class="e"><svg viewBox="0 0 34 44"><path d="M8.9 16.2 L6.6 18.4 L11 23.8 L20.6 33.8 L21.6 33 L15 21.6 Z" fill="#a9bacb"/><path d="M17.2 15.4 L19.6 17.4 L15.2 23.6 L5.4 33.8 L4.4 33 L11.2 21.4 Z" fill="#dde5ed"/><path d="M12.6 22.6 L5.4 33.8 L4.4 33 L11 22 Z" fill="#c2cfdc"/><circle cx="13.1" cy="21.8" r="1.1" fill="#7b8794"/><ellipse cx="5.7" cy="13.6" rx="3.9" ry="3.5" fill="none" stroke="#e4605a" stroke-width="2.2" transform="rotate(-25 5.7 13.6)"/><ellipse cx="20.4" cy="12.6" rx="3.9" ry="3.5" fill="none" stroke="#e4605a" stroke-width="2.2" transform="rotate(25 20.4 12.6)"/></svg></span><span class="t s">"</span><span class="t ">) </span><span class="t k">or</span><span class="t "> \</span></div>
<div class="ln" style="top:1179px"><span class="t">24</span></div>
<div class="cl" style="top:1179px"><span class="t ">            (user_choice== </span><span class="t s">"</span><span class="e"><svg viewBox="0 0 34 44"><path d="M4.5 11 H26 V33.4 H4.5 Z" fill="#b4b6ba"/><path d="M0.6 7.8 H12 C13.5 7.8 14.2 8.6 15 9.8 L17 13 C18 14 19.5 14.2 24 14.2 V31.6 H0.6 Z" fill="#dcdddf"/><path d="M12.5 8 C14.5 9.5 15 12 15.6 14 C17 15.6 20 16.4 23.8 16.6 V14.2 C19.5 14.2 18 14 17 13 L15 9.8 C14.3 8.7 13.6 8.1 12.5 8 Z" fill="#9a9ca1"/><rect x="3" y="17.5" width="17" height="1.2" fill="#c3c5c9"/><rect x="3" y="21" width="17" height="1.2" fill="#c3c5c9"/><rect x="3" y="24.5" width="17" height="1.2" fill="#c3c5c9"/><rect x="3" y="28" width="13" height="1.2" fill="#c3c5c9"/><rect x="24.4" y="16.8" width="2.1" height="3.8" fill="#4d8fe8"/><rect x="20.8" y="23" width="1.8" height="4.4" fill="#4d8fe8"/></svg></span><span class="t s">"</span><span class="t "> </span><span class="t k">and</span><span class="t "> computer_choice == </span><span class="t s">"</span><span class="e"><svg viewBox="0 0 34 44"><path d="M0.8 29.5 C0.4 24 3 16.5 8 12.6 C11 10.3 15 9.9 18 11.4 C22.5 14 25 20 25.3 27 L24.9 30.6 C19 32.4 6 32.4 1 30.9 Z" fill="#656662"/><path d="M5 15.5 C8 11.5 14 9.8 18 11.4 C20 12.6 21.5 14.5 22.6 16.6 C18 14.5 12 15.5 8.5 19 C7 17.5 6 16.5 5 15.5 Z" fill="#8b8c87"/><path d="M8.5 19 C12 15.5 18 14.5 22.6 16.6 C24 19.5 24.9 23 25.2 26 C20 24 12 24.5 8 27 C8 24 8 21.5 8.5 19 Z" fill="#757672"/><path d="M0.8 29 C3 27.4 6 27 8 27 C12 24.5 20 24 25.2 26 L24.9 30.6 C19 32.4 6 32.4 1 30.9 Z" fill="#41423f"/></svg></span><span class="t s">"</span><span class="t ">) </span><span class="t k">or</span><span class="t "> \</span></div>
<div class="ln" style="top:1223px"><span class="t">25</span></div>
<div class="cl" style="top:1223px"><span class="t ">            (user_choice == </span><span class="t s">"</span><span class="e"><svg viewBox="0 0 34 44"><path d="M8.9 16.2 L6.6 18.4 L11 23.8 L20.6 33.8 L21.6 33 L15 21.6 Z" fill="#a9bacb"/><path d="M17.2 15.4 L19.6 17.4 L15.2 23.6 L5.4 33.8 L4.4 33 L11.2 21.4 Z" fill="#dde5ed"/><path d="M12.6 22.6 L5.4 33.8 L4.4 33 L11 22 Z" fill="#c2cfdc"/><circle cx="13.1" cy="21.8" r="1.1" fill="#7b8794"/><ellipse cx="5.7" cy="13.6" rx="3.9" ry="3.5" fill="none" stroke="#e4605a" stroke-width="2.2" transform="rotate(-25 5.7 13.6)"/><ellipse cx="20.4" cy="12.6" rx="3.9" ry="3.5" fill="none" stroke="#e4605a" stroke-width="2.2" transform="rotate(25 20.4 12.6)"/></svg></span><span class="t s">"</span><span class="t "> </span><span class="t k">and</span><span class="t "> computer_choice == </span><span class="t s">"</span><span class="e"><svg viewBox="0 0 34 44"><path d="M4.5 11 H26 V33.4 H4.5 Z" fill="#b4b6ba"/><path d="M0.6 7.8 H12 C13.5 7.8 14.2 8.6 15 9.8 L17 13 C18 14 19.5 14.2 24 14.2 V31.6 H0.6 Z" fill="#dcdddf"/><path d="M12.5 8 C14.5 9.5 15 12 15.6 14 C17 15.6 20 16.4 23.8 16.6 V14.2 C19.5 14.2 18 14 17 13 L15 9.8 C14.3 8.7 13.6 8.1 12.5 8 Z" fill="#9a9ca1"/><rect x="3" y="17.5" width="17" height="1.2" fill="#c3c5c9"/><rect x="3" y="21" width="17" height="1.2" fill="#c3c5c9"/><rect x="3" y="24.5" width="17" height="1.2" fill="#c3c5c9"/><rect x="3" y="28" width="13" height="1.2" fill="#c3c5c9"/><rect x="24.4" y="16.8" width="2.1" height="3.8" fill="#4d8fe8"/><rect x="20.8" y="23" width="1.8" height="4.4" fill="#4d8fe8"/></svg></span><span class="t s">"</span><span class="t ">):</span></div>
<div class="ln" style="top:1267px"><span class="t">26</span></div>
<div class="cl" style="top:1267px"><span class="t ">        </span><span class="t b">print</span><span class="t ">(</span><span class="t s">f'computer choice : </span><span class="t k">{</span><span class="t ">computer_choice</span><span class="t k">}</span><span class="t s">'</span><span class="t ">)</span></div>
<div class="ln" style="top:1311px"><span class="t">27</span></div>
<div class="cl" style="top:1311px"><span class="t ">        </span><span class="t b">print</span><span class="t ">()</span></div>
<div class="ln" style="top:1355px"><span class="t">28</span></div>
<div class="cl" style="top:1355px"><span class="t ">        </span><span class="t b">print</span><span class="t ">(</span><span class="t s">"you won </span><span class="e"><svg viewBox="0 0 34 44"><ellipse cx="6" cy="14" rx="6.6" ry="3.6" transform="rotate(32 6 14)" fill="#a9e2d3"/><ellipse cx="20.5" cy="12.6" rx="6.8" ry="3.5" transform="rotate(-40 20.5 12.6)" fill="#a9e2d3"/><ellipse cx="8.5" cy="23" rx="4.6" ry="2.8" transform="rotate(-35 8.5 23)" fill="#b9e8dc"/><ellipse cx="19.5" cy="22" rx="5" ry="2.8" transform="rotate(40 19.5 22)" fill="#b9e8dc"/><circle cx="12.3" cy="13.4" r="2.9" fill="#d83a3a"/><circle cx="12.6" cy="14.6" r="1.9" fill="#f0cdb0"/><path d="M10.4 17 L14.6 16.6 L15 21 L10.6 21.4 Z" fill="#eec3a4"/><path d="M6.5 20.8 L10.6 18.4 M14.6 17.6 L19.6 13.4" stroke="#eec3a4" stroke-width="1.3" stroke-linecap="round"/><path d="M9.6 21 L15.6 20.6 L14.8 26.6 L9 26 Z" fill="#d6343c"/><path d="M11 26.4 L9.8 33.6 M13 26.4 L12 29.6" stroke="#eec3a4" stroke-width="1.5" stroke-linecap="round"/><circle cx="20" cy="12.4" r=".9" fill="#f5d25a"/></svg></span><span class="e"><svg viewBox="0 0 34 44"><defs><radialGradient id="pg" cx=".5" cy=".35" r=".65"><stop offset="0" stop-color="#fee05a"/><stop offset=".6" stop-color="#f9bd3a"/><stop offset="1" stop-color="#ea8f28"/></radialGradient></defs><circle cx="13" cy="21.2" r="12" fill="url(#pg)"/><path d="M0.4 8 L7.4 10.6 L2.6 15.6 Z" fill="#5a55d0"/><path d="M1.6 11.2 L5.4 9.8 M2.2 13.6 L6.6 11.4" stroke="#ee5fa0" stroke-width="1"/><path d="M6.6 20.4 Q8.8 18.2 11 20.4 M14.6 20.4 Q16.8 18.2 19 20.4" stroke="#8a4a12" stroke-width="1.3" fill="none" stroke-linecap="round"/><path d="M6.2 17.4 Q8.8 15.6 11.4 17 M14.4 17 Q17 15.6 19.6 17.4" stroke="#c9832a" stroke-width="1" fill="none" stroke-linecap="round"/><circle cx="6.4" cy="24.6" r="2.2" fill="#f4913a" opacity=".7"/><path d="M12.8 24.8 Q15 26.6 12.8 28.4" stroke="#8a4a12" stroke-width="1.3" fill="none" stroke-linecap="round"/><path d="M13.6 26 L24 24.4 L24.4 27 L13.8 27.6 Z" fill="#4a53cf"/><circle cx="24.8" cy="24.6" r="1.8" fill="none" stroke="#7d4fc7" stroke-width="1.2"/><path d="M16 25.6 L16.4 27.4 M19 25.2 L19.4 27.2 M22 24.8 L22.4 27" stroke="#d64a8e" stroke-width=".9"/><circle cx="22.4" cy="9.6" r="1" fill="#4a63d6"/><circle cx="16" cy="11" r=".9" fill="#e95f8f"/><circle cx="24.8" cy="15.4" r=".9" fill="#f5d23e"/><circle cx="1.4" cy="26" r="1" fill="#4a63d6"/><circle cx="2.4" cy="31.6" r="1" fill="#e9487a"/><circle cx="7.6" cy="32.6" r=".9" fill="#f5d23e"/><circle cx="23.4" cy="30" r="1" fill="#f0a23a"/></svg></span><span class="t s">"</span><span class="t ">)</span></div>
<div class="ln" style="top:1399px"><span class="t">29</span></div>
<div class="cl" style="top:1399px"><span class="t ">        </span><span class="t b">print</span><span class="t ">(</span><span class="t n">20</span><span class="t ">* </span><span class="t s">"-"</span><span class="t ">)</span></div>
<div class="ln" style="top:1443px"><span class="t">30</span></div>
<div class="cl" style="top:1443px"><span class="t ">        </span><span class="t b">print</span><span class="t ">()</span></div>
<div class="ln" style="top:1487px"><span class="t">31</span></div>
<div class="cl" style="top:1487px"><span class="t ">        user_score +=</span><span class="t n">1</span></div>
<div class="ln" style="top:1531px"><span class="t">32</span></div>
<div class="ln" style="top:1575px"><span class="t">33</span></div>
<div class="cl" style="top:1575px"><span class="t ">    </span><span class="t k">else</span><span class="t "> :</span></div>
<div class="ln" style="top:1619px"><span class="t">34</span></div>
<div class="cl" style="top:1619px"><span class="t ">        </span><span class="t b">print</span><span class="t ">(</span><span class="t s">f'computer choice : </span><span class="t k">{</span><span class="t ">computer_choice</span><span class="t k">}</span><span class="t s">'</span><span class="t ">)</span></div>
<div class="ln" style="top:1663px"><span class="t">35</span></div>
<div class="cl" style="top:1663px"><span class="t ">        </span><span class="t b">print</span><span class="t ">(</span><span class="t n">20</span><span class="t ">*</span><span class="t s">"-"</span><span class="t ">)</span></div>
<div class="ln" style="top:1707px"><span class="t">36</span></div>
<div class="cl" style="top:1707px"><span class="t ">        </span><span class="t b">print</span><span class="t ">(</span><span class="t s">"computer won </span><span class="e"><svg viewBox="0 0 34 44"><path d="M2 8 H24.8 V21 H2 Z" fill="#3a3a3c"/><path d="M3 9 H23.8 V20.4 H3 Z" fill="#020203"/><path d="M16 9 H23.8 V20.4 H21 Z" fill="#2c2d30"/><path d="M2.6 21 H24.2 L24.8 27.2 H2 Z" fill="#6d6e70"/><path d="M3.6 22 H23.2 L23.6 26 H3.2 Z" fill="#4c4d4f"/><path d="M2 27.2 H24.8 L25.6 33 H1.2 Z" fill="#c4c5c7"/><path d="M8 27.8 H18.8 L19.2 32.4 H7.6 Z" fill="#aeafb2"/><path d="M0.8 33 H26 V33.9 H0.8 Z" fill="#dcdcde"/></svg></span><span class="e"><svg viewBox="0 0 34 44"><path d="M14 21 C12.5 17 12 12.5 13.4 10 C14.6 8.6 15.8 9.6 16 11.6 C16.8 10 18 9.6 18.8 11 C19.6 12.4 19.6 14.2 19.6 15 C21 13.8 22 14.8 22 16.6 C22.6 19.6 23.6 22.4 23.2 26 C22.8 30.4 19.4 33.8 15 33.8 C11.6 33.8 9.4 32.2 7.6 29.4 L5.6 26.4 C8.4 27.8 11 27 12.6 25 Z" fill="#f8dfc6"/><path d="M15.4 12 C15.8 15 16.8 18 18.6 21 M19 13 C19.4 16 20.4 19 21.6 21.2" stroke="#e2b88e" stroke-width=".9" fill="none"/><circle cx="9.4" cy="22.2" r="4" fill="none" stroke="#f5d6b8" stroke-width="3"/><path d="M5 23 C4 19 8 16.6 11.4 17.6 C13.4 18.4 14.4 20 14.6 21.6" stroke="#fae6d2" stroke-width="1.6" fill="none" stroke-linecap="round"/><path d="M22 28 C21 31.6 18 33.6 14.6 33.6" stroke="#e2b88e" stroke-width="1.2" fill="none"/></svg></span><span class="t s">"</span><span class="t ">)</span></div>
<div class="ln" style="top:1751px"><span class="t">37</span></div>
<div class="cl" style="top:1751px"><span class="t ">        </span><span class="t b">print</span><span class="t ">()</span></div>
</div>
<svg class="abs" style="left:0px;top:0px;" width="10" height="10" viewBox="0 0 10 10" fill="none"><path d="M2906.3 193.6 L2912.2 199.2 L2925 186" stroke="#6aa869" stroke-width="3.6" stroke-linecap="round" stroke-linejoin="round"/></svg>
<div class="abs" style="left:2922px;top:222px;width:14px;height:1082px;border-radius:7px;background:#3f4145;"></div>
<svg class="abs" style="left:0px;top:0px;" width="10" height="10" viewBox="0 0 10 10" fill="none"><path d="M311.4 497.6 V491.5 a11.2 11.2 0 1 1 13.6 0 V497.6 Z" fill="#1e1f22"/><circle cx="318.2" cy="484.7" r="9.8" fill="#ebc76d"/><path d="M312.9 489 H323.7 V496 H312.9 Z" fill="#ebc76d"/><rect x="313.9" y="497.2" width="8.6" height="1.9" rx=".9" fill="#dfe1e5"/><rect x="315.2" y="501.8" width="6.4" height="1.9" rx=".9" fill="#dfe1e5"/></svg>

<div id="findtop" class="abs"></div>
<div id="findbar" class="abs"></div>
<div id="statustop" class="abs"></div>
<div id="status" class="abs"></div>
<div class="abs" style="left:104.69px;top:1794.24px;font-size:27px;line-height:40px;letter-spacing:-0.297px;color:#dfe1e5;white-space:nowrap;-webkit-text-stroke:0.2px #dfe1e5;font-weight:bold;">Find</div>
<div class="abs" style="left:28px;top:1854px;width:16px;height:16px;box-sizing:border-box;border:2.2px solid #6089ef;border-radius:3.5px;background:#28324b;"></div>
<div class="abs" style="left:50.99px;top:1840.64px;font-size:27px;line-height:40px;letter-spacing:0.502px;color:#a4a7ae;white-space:nowrap;-webkit-text-stroke:0.2px #a4a7ae;">PythonProject</div>
<svg class="abs" style="left:0px;top:0px;" width="10" height="10" viewBox="0 0 10 10" fill="none"><path d="M246 1853.4 L253 1860.2 L246 1867" stroke="#a4a7ae" stroke-width="2.2" stroke-linecap="round" stroke-linejoin="round"/></svg>
<svg class="abs" style="left:274px;top:1844px;" width="32" height="32" viewBox="0 0 16 16" fill="none"><path fill-rule="evenodd" d="M7.96 1C4.4 1 4.63 2.53 4.63 2.53V4.13H8.03V4.6H3.29C3.29 4.6 1 4.35 1 7.92C1 11.49 3 11.37 3 11.37H4.17V9.71C4.17 9.71 4.1 7.72 6.13 7.72H9.49C9.49 7.72 11.39 7.75 11.39 5.9V2.84C11.39 2.84 11.68 1 7.96 1ZM6.09 2.07C6.43 2.07 6.7 2.34 6.7 2.68C6.7 3.02 6.43 3.29 6.09 3.29C5.75 3.29 5.48 3.02 5.48 2.68C5.48 2.34 5.75 2.07 6.09 2.07Z" fill="#6089ef"/><path fill-rule="evenodd" d="M8.04 15C11.6 15 11.37 13.47 11.37 13.47V11.87H7.97V11.4H12.71C12.71 11.4 15 11.65 15 8.08C15 4.51 13 4.63 13 4.63H11.83V6.29C11.83 6.29 11.9 8.28 9.87 8.28H6.51C6.51 8.28 4.61 8.25 4.61 10.1V13.16C4.61 13.16 4.32 15 8.04 15ZM9.91 13.93C9.57 13.93 9.3 13.66 9.3 13.32C9.3 12.98 9.57 12.71 9.91 12.71C10.25 12.71 10.52 12.98 10.52 13.32C10.52 13.66 10.25 13.93 9.91 13.93Z" fill="#ebc76d"/></svg>
<div class="abs" style="left:314.32px;top:1840.64px;font-size:27px;line-height:40px;letter-spacing:0.434px;color:#a4a7ae;white-space:nowrap;-webkit-text-stroke:0.2px #a4a7ae;">file.py</div>
<div class="abs" style="left:2182.83px;top:1840.64px;font-size:27px;line-height:40px;letter-spacing:-0.274px;color:#a4a7ae;white-space:nowrap;-webkit-text-stroke:0.2px #a4a7ae;">9:1</div>
<div class="abs" style="left:2250.69px;top:1840.64px;font-size:27px;line-height:40px;letter-spacing:0.188px;color:#a4a7ae;white-space:nowrap;-webkit-text-stroke:0.2px #a4a7ae;">LF</div>
<div class="abs" style="left:2312.92px;top:1840.64px;font-size:27px;line-height:40px;letter-spacing:1.017px;color:#a4a7ae;white-space:nowrap;-webkit-text-stroke:0.2px #a4a7ae;">UTF-8</div>
<div class="abs" style="left:2434.18px;top:1840.64px;font-size:27px;line-height:40px;letter-spacing:0.490px;color:#a4a7ae;white-space:nowrap;-webkit-text-stroke:0.2px #a4a7ae;">4 spaces</div>
<div class="abs" style="left:2576.79px;top:1840.64px;font-size:27px;line-height:40px;letter-spacing:0.366px;color:#a4a7ae;white-space:nowrap;-webkit-text-stroke:0.2px #a4a7ae;">Python 3.13 (PythonProject)</div>
<svg class="abs" style="left:0px;top:0px;" width="10" height="10" viewBox="0 0 10 10" fill="none"><g stroke="#ced0d6" stroke-width="2.3" stroke-linecap="round" fill="none"><rect x="2963.2" y="1858.4" width="17.8" height="14" rx="3"/><path d="M2972.1 1863 V1868"/><path d="M2976.4 1858 V1856 a5.2 5.2 0 0 1 10.4 0 V1857.4"/></g></svg>
</body>
</html>
